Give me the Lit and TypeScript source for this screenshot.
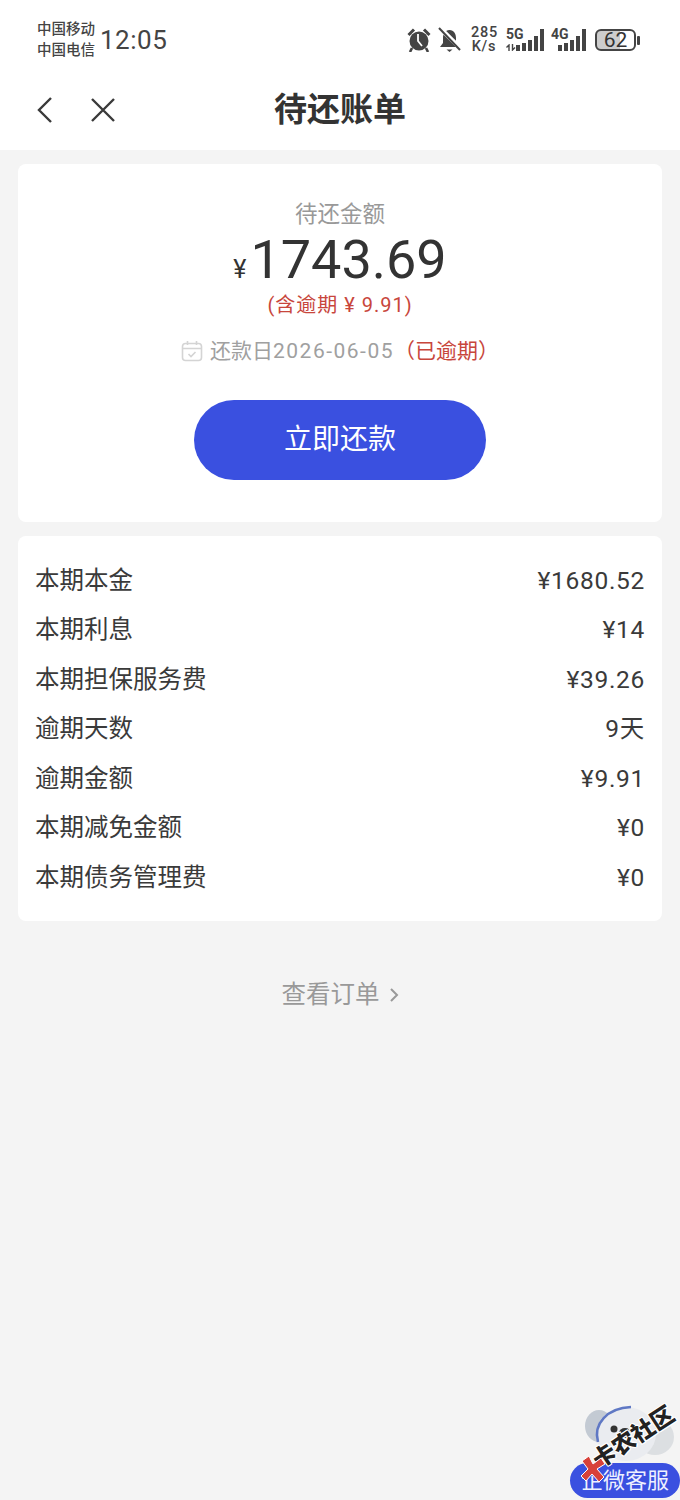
import { LitElement, html, css, svg } from 'lit';
import { customElement } from 'lit/decorators.js';

const rows = [
  ['本期本金', '¥1680.52'],
  ['本期利息', '¥14'],
  ['本期担保服务费', '¥39.26'],
  ['逾期天数', '9天'],
  ['逾期金额', '¥9.91'],
  ['本期减免金额', '¥0'],
  ['本期债务管理费', '¥0'],
];

const signal = (heights: number[]) => svg`
  ${heights.map(
    (h, i) => svg`<rect x=${i * 6} y=${22 - h} width="4" height=${h} fill="#444"></rect>`
  )}
`;

@customElement('app-root')
export class AppRoot extends LitElement {
  static styles = css`
    :host {
      display: block;
      width: 680px;
      height: 1500px;
      position: relative;
      overflow: hidden;
      background: #f4f4f4;
      font-family: 'Roboto', 'Noto Sans CJK SC', sans-serif;
      color: #333;
    }
    .top {
      background: #fff;
      height: 150px;
    }
    .status {
      height: 78px;
      box-sizing: border-box;
      padding: 2px 40px 0 37px;
      display: flex;
      align-items: center;
      justify-content: space-between;
    }
    .left,
    .right {
      display: flex;
      align-items: center;
    }
    .carriers {
      font-size: 14.5px;
      line-height: 21px;
      font-weight: 500;
      color: #444;
      width: 63px;
    }
    .time {
      font-size: 26px;
      line-height: 30px;
      color: #444;
      letter-spacing: 0.5px;
    }
    .alarm {
      margin-right: 7px;
    }
    .bell {
      margin-right: 10px;
    }
    .speed {
      width: 26px;
      margin-right: 8px;
      font-size: 14.5px;
      line-height: 14px;
      font-weight: 500;
      color: #444;
      text-align: center;
      letter-spacing: 0.8px;
      white-space: nowrap;
    }
    .net {
      position: relative;
      height: 24px;
    }
    .net span {
      position: absolute;
      left: 1px;
      top: -1px;
      font-size: 14px;
      line-height: 14px;
      font-weight: 700;
      color: #444;
    }
    .net svg {
      position: absolute;
      right: 0;
      bottom: 1px;
    }
    .net-5g {
      width: 39px;
      margin-right: 6px;
    }
    .net-4g {
      width: 36px;
      margin-right: 9px;
    }
    .net .arrows {
      left: 1px;
      right: auto;
      bottom: 1px;
    }
    .battery {
      display: flex;
      align-items: center;
      gap: 1px;
    }
    .battery-body {
      width: 41px;
      height: 22px;
      border: 2px solid #444;
      border-radius: 6px;
      box-sizing: border-box;
      font-size: 21px;
      line-height: 18px;
      text-align: center;
      color: #333;
      background: linear-gradient(90deg, #cdcdcd 62%, #fff 62%);
    }
    .battery-tip {
      width: 3px;
      height: 9px;
      background: #444;
      border-radius: 1px;
    }
    .nav {
      height: 72px;
      box-sizing: border-box;
      padding-bottom: 8px;
      position: relative;
      display: flex;
      align-items: center;
      justify-content: center;
    }
    .nav-icons {
      position: absolute;
      left: 36px;
      top: 18px;
      display: flex;
      gap: 34px;
    }
    .title {
      font-size: 33px;
      line-height: 44px;
      font-weight: 700;
      color: #333;
    }
    .content {
      padding: 14px 18px 0;
      display: flex;
      flex-direction: column;
      gap: 14px;
    }
    .card {
      background: #fff;
      border-radius: 8px;
    }
    .summary {
      height: 358px;
      box-sizing: border-box;
      padding-top: 35px;
      display: flex;
      flex-direction: column;
      align-items: center;
    }
    .label {
      font-size: 22.5px;
      line-height: 30px;
      color: #999;
    }
    .amount {
      display: flex;
      align-items: baseline;
      height: 60px;
      line-height: 60px;
      color: #333;
      font-size: 54px;
      margin-top: 1px;
    }
    .amount small {
      font-size: 25px;
      margin-right: 4px;
    }
    .overdue {
      font-size: 20px;
      line-height: 28px;
      margin-top: 1px;
      color: #c8463c;
      letter-spacing: 1px;
    }
    .due {
      margin-top: 17px;
      display: flex;
      align-items: center;
      font-size: 21px;
      line-height: 30px;
      color: #a0a0a0;
    }
    .due svg {
      margin-right: 7px;
    }
    .due i {
      font-style: normal;
      letter-spacing: 1.5px;
    }
    .due b {
      font-weight: 400;
      color: #c8463c;
    }
    .pay {
      margin-top: 34px;
      width: 292px;
      height: 80px;
      border-radius: 40px;
      background: #3a50e0;
      color: #fff;
      font-size: 28px;
      line-height: 38px;
      display: flex;
      align-items: center;
      justify-content: center;
    }
    .details {
      height: 385px;
      box-sizing: border-box;
      padding: 20px 17px 0;
    }
    .row {
      height: 49.5px;
      display: flex;
      align-items: center;
      justify-content: space-between;
      font-size: 24.5px;
      line-height: 30px;
      color: #3a3a3a;
    }
    .row span + span {
      letter-spacing: 0.7px;
    }
    .link {
      margin-top: 56px;
      display: flex;
      justify-content: center;
      align-items: center;
      gap: 9px;
      font-size: 24.5px;
      line-height: 36px;
      color: #999;
    }
    .float {
      position: absolute;
      right: 0;
      top: 1463px;
      width: 110px;
      height: 35px;
      border-radius: 18px;
      background: #3a50e0;
      color: #eef0ff;
      font-size: 22px;
      line-height: 35px;
      text-align: center;
    }
    .mascot {
      position: absolute;
      left: 583px;
      top: 1404px;
    }
    .mark {
      position: absolute;
      left: 588px;
      top: 1423px;
      font-size: 23px;
      line-height: 30px;
      font-weight: 900;
      color: #222;
      text-shadow: 1px 1px 0 #fff, -1px -1px 0 #fff, 1px -1px 0 #fff, -1px 1px 0 #fff;
      transform: rotate(-33deg);
      white-space: nowrap;
    }
    .mark-logo {
      position: absolute;
      left: 579px;
      top: 1455px;
    }
  `;

  render() {
    return html`
      <div class="top">
        <div class="status">
          <div class="left">
            <div class="carriers">中国移动<br />中国电信</div>
            <div class="time">12:05</div>
          </div>
          <div class="right">
            <svg class="alarm" width="24" height="24" viewBox="0 0 24 24">
              <circle cx="12" cy="13" r="9.5" fill="#444"></circle>
              <path d="M1.5 7 L7 1.5 M17 1.5 L22.5 7" stroke="#444" stroke-width="3" fill="none"></path>
              <path d="M11 6 V13 L15 18" stroke="#fff" stroke-width="1.8" fill="none"></path>
              <path d="M5 20 L3 24 M19 20 L21 24" stroke="#444" stroke-width="2.6"></path>
            </svg>
            <svg class="bell" width="23" height="26" viewBox="0 0 23 26">
              <path d="M11.5 3 C7 3 5 7 5 11 V16 L2 20 H21 L18 16 V11 C18 7 16 3 11.5 3 Z" fill="#444"></path>
              <path d="M8.5 22.5 H14.5 L11.5 25 Z" fill="#444"></path>
              <path d="M1 0 L23 22" stroke="#fff" stroke-width="4.5"></path>
              <path d="M1 1 L22 23" stroke="#444" stroke-width="2"></path>
            </svg>
            <div class="speed">285<br />K/s</div>
            <div class="net net-5g">
              <span>5G</span>
              <svg class="arrows" width="10" height="7" viewBox="0 0 10 7">
                <path d="M3 7 V1 L0.5 3.5 M6.5 0 V6 L9 3.5" stroke="#444" stroke-width="1.4" fill="none"></path>
              </svg>
              <svg width="28" height="22">${signal([6, 8, 11, 15, 22])}</svg>
            </div>
            <div class="net net-4g">
              <span>4G</span>
              <svg width="28" height="22">${signal([6, 8, 11, 15, 22])}</svg>
            </div>
            <div class="battery">
              <div class="battery-body">62</div>
              <div class="battery-tip"></div>
            </div>
          </div>
        </div>
        <div class="nav">
          <div class="nav-icons">
            <svg width="20" height="28" viewBox="0 0 20 28">
              <path d="M15 2 L3 14 L15 26" fill="none" stroke="#3a3a3a" stroke-width="2.4"></path>
            </svg>
            <svg width="26" height="28" viewBox="0 0 26 28">
              <path d="M2 3 L24 25 M24 3 L2 25" fill="none" stroke="#3a3a3a" stroke-width="2.4"></path>
            </svg>
          </div>
          <div class="title">待还账单</div>
        </div>
      </div>
      <div class="content">
        <div class="card summary">
          <div class="label">待还金额</div>
          <div class="amount"><small>¥</small>1743.69</div>
          <div class="overdue">(含逾期 ¥ 9.91)</div>
          <div class="due">
            <svg width="22" height="22" viewBox="0 0 22 22" fill="none" stroke="#d4d4d4" stroke-width="1.6">
              <rect x="1.5" y="3.5" width="19" height="17" rx="3"></rect>
              <path d="M1.5 8.5 H20.5 M6.5 1 V5 M15.5 1 V5"></path>
              <path d="M7.5 14 L10 16.5 L14.5 12"></path>
            </svg>
            还款日<i>2026-06-05</i><b>（已逾期）</b>
          </div>
          <div class="pay">立即还款</div>
        </div>
        <div class="card details">
          ${rows.map(
            ([name, value]) => html`<div class="row"><span>${name}</span><span>${value}</span></div>`
          )}
        </div>
      </div>
      <div class="link">
        查看订单
        <svg width="10" height="16" viewBox="0 0 10 16">
          <path d="M2 2 L8 8 L2 14" fill="none" stroke="#999" stroke-width="2"></path>
        </svg>
      </div>
      <svg class="mascot" width="95" height="64" viewBox="0 0 95 64">
        <ellipse cx="16" cy="22" rx="14" ry="16" fill="#c3cad3"></ellipse>
        <ellipse cx="72" cy="33" rx="19" ry="18" fill="#dcdfe2"></ellipse>
        <ellipse cx="43" cy="30" rx="30" ry="27" fill="#eaecf0"></ellipse>
        <path d="M15 38 C10 20 24 4 48 3" fill="none" stroke="#5f78c4" stroke-width="2.6"></path>
        <circle cx="31" cy="25" r="3.5" fill="#333"></circle>
        <ellipse cx="42" cy="29" rx="6" ry="5" fill="#333"></ellipse>
      </svg>
      <div class="float">企微客服</div>
      <div class="mark">卡农社区</div>
      <svg class="mark-logo" width="28" height="28" viewBox="0 0 28 28">
        <path d="M3 6 L10 1 L14 9 L22 3 L26 9 L18 14 L25 22 L20 27 L13 19 L7 26 L2 21 L9 14 Z" fill="#d8413a" stroke="#fff" stroke-width="1"></path>
      </svg>
    `;
  }
}
